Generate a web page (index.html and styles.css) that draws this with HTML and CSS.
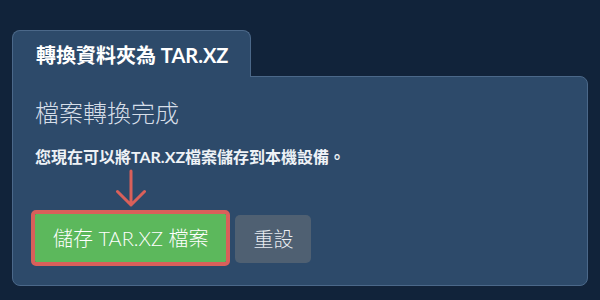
FILE: index.html
```html
<!DOCTYPE html>
<html lang="zh-Hant">
<head>
    <meta charset="UTF-8">
    <meta name="viewport" content="width=device-width, initial-scale=1.0">
    <title>轉換資料夾為 TAR.XZ</title>
    <link rel="stylesheet" href="styles.css">
</head>
<body>
    <div class="container">
        <div class="tab">轉換資料夾為 TAR.XZ</div>

        <div class="panel">
            <h2 class="done-title">檔案轉換完成</h2>
            <p class="done-text">您現在可以將TAR.XZ檔案儲存到本機設備。</p>

            <div class="actions">
                <div class="save-group">
                    <svg class="pointer" width="30" height="38" viewBox="0 0 30 38">
                        <path d="M15 2 V36 M1.5 22.5 L15 36 L28.5 22.5" fill="none" stroke="#d9605a" stroke-width="3" stroke-linecap="round" stroke-linejoin="round"/>
                    </svg>
                    <button class="btn btn-save">儲存 TAR.XZ 檔案</button>
                </div>
                <button class="btn btn-reset">重設</button>
            </div>
        </div>
    </div>
</body>
</html>
```

FILE: styles.css
```css
body {
    margin: 0;
    padding: 0;
    background-color: #11233a;
    font-family: Lato, "Noto Sans CJK TC", sans-serif;
    color: #fff;
}

.container {
    padding: 30px 12px 0;
}

.tab {
    position: relative;
    z-index: 1;
    display: inline-block;
    box-sizing: border-box;
    height: 47px;
    margin-bottom: -1px;
    padding: 2px 22px 0 23px;
    background-color: #2d4a6a;
    border: 1px solid #4b6889;
    border-bottom: none;
    border-radius: 8px 8px 0 0;
    font-size: 20px;
    font-weight: bold;
    line-height: 44px;
    color: #fff;
}

.panel {
    background-color: #2d4a6a;
    border: 1px solid #4b6889;
    border-radius: 0 8px 8px 8px;
    padding: 20px 22px 23px;
}

.done-title {
    margin: 0;
    font-size: 24px;
    font-weight: 300;
    line-height: 32px;
    color: #d6dee8;
}

.done-text {
    margin: 16px 0 0;
    font-size: 16px;
    font-weight: bold;
    line-height: 24px;
    color: #eef2f6;
}

.actions {
    display: flex;
    align-items: flex-end;
    gap: 9px;
}

.save-group {
    display: flex;
    flex-direction: column;
    align-items: center;
}

.pointer {
    display: block;
    margin: 0 0 7px;
}

.btn {
    height: 48px;
    padding: 0 18px;
    border: none;
    font-family: Lato, "Noto Sans CJK TC", sans-serif;
    font-size: 20px;
    font-weight: 300;
    line-height: 48px;
    color: #fff;
    cursor: pointer;
}

.btn-save {
    background-color: #5cb85c;
    border-radius: 1px;
    outline: 4px solid #d9605a;
}

.btn-reset {
    background-color: #4f6072;
    border-radius: 5px;
    color: #e9edf1;
    margin-bottom: -1px;
}
```
